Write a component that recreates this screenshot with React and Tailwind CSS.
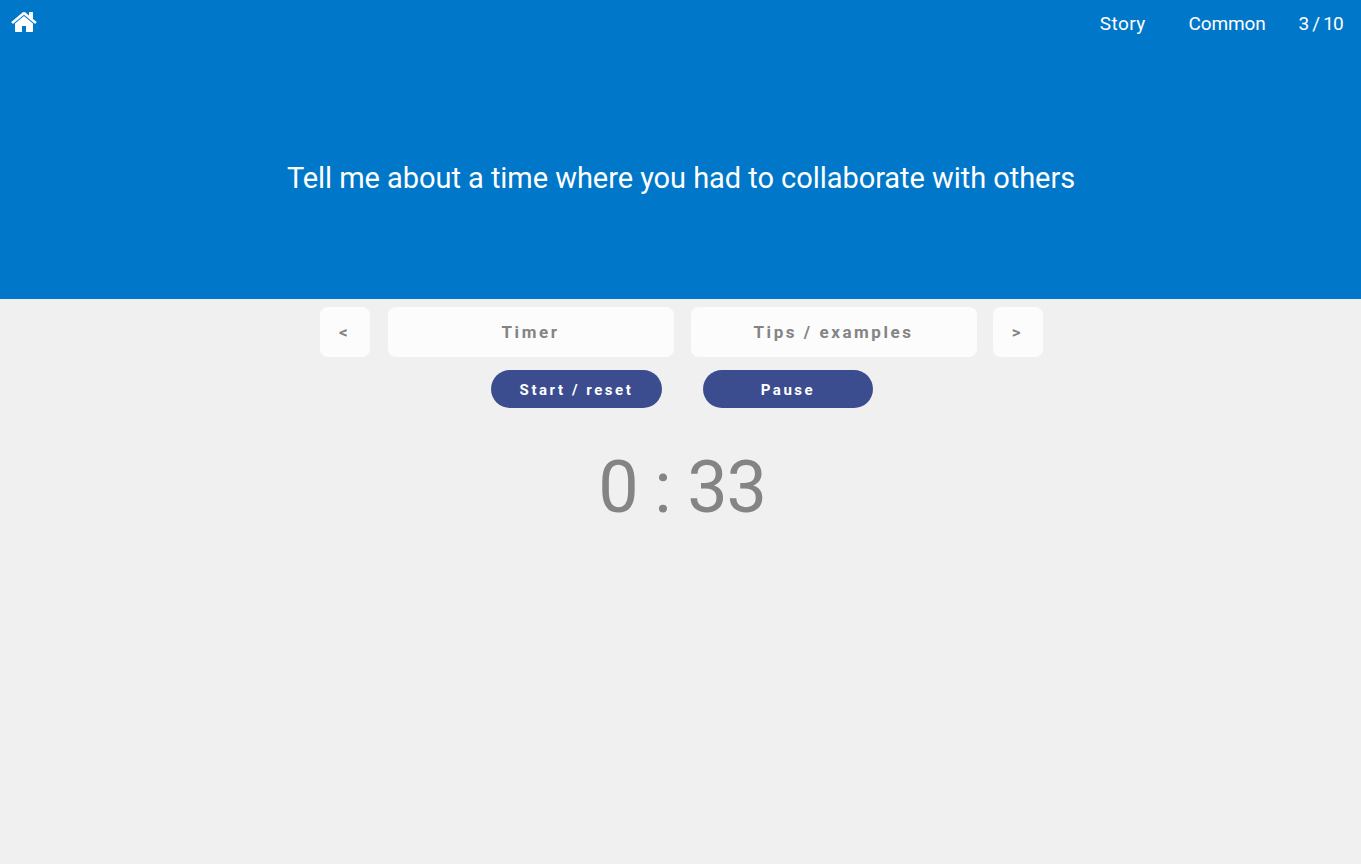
import React from "react";

function HomeIcon() {
  return (
    <svg viewBox="0 0 1792 1792" className="w-[28px] h-[28px] fill-white">
      <path d="M1472 992v480q0 26-19 45t-45 19h-384v-384h-256v384h-384q-26 0-45-19t-19-45v-480q0-1 .5-3t.5-3l575-474 575 474q1 2 1 6zm223-69l-62 74q-8 9-21 11h-3q-13 0-21-7l-692-577-692 577q-12 8-24 7-13-2-21-11l-62-74q-8-10-7-23.500t11-21.500l719-599q32-26 76-26t76 26l244 204v-195q0-14 9-23t23-9h192q14 0 23 9t9 23v408l219 182q10 8 11 21.500t-7 23.500z" />
    </svg>
  );
}

export default function App() {
  const nav = "font-['Roboto',sans-serif] text-[19px] leading-[23px] text-white";
  const box = "h-[50px] pt-[2px] rounded-lg bg-[#fcfcfc] flex items-center justify-center font-['Roboto',sans-serif] font-bold text-[17px] tracking-[2.55px] text-[#848484]";
  const pill = "h-[38px] pt-[2px] rounded-full bg-[#3b4d8f] flex items-center justify-center font-['Roboto',sans-serif] font-bold text-[15px] tracking-[2.55px] text-white";
  return (
    <div className="min-h-[864px] bg-[#f0f0f0] font-['Roboto',sans-serif]">
      <header className="h-[299px] bg-[#0077c8] flex flex-col">
        <div className="flex items-start justify-between pl-[10px] pr-[18px] pt-[8px]">
          <HomeIcon />
          <div className="flex items-center mt-[4px]">
            <span className={`${nav} mr-[43px] tracking-[0.4px]`}>Story</span>
            <span className={`${nav} mr-[33px] tracking-[-0.15px]`}>Common</span>
            <span className={`${nav} tracking-[-0.8px]`}>3 / 10</span>
          </div>
        </div>
        <div className="flex-1 flex items-center justify-center pt-[21px] pl-[1px]">
          <h1 className="font-normal text-[29px] leading-[36px] tracking-[-0.05px] text-white">Tell me about a time where you had to collaborate with others</h1>
        </div>
      </header>
      <div className="flex justify-center pt-[8px] pl-[1px]">
        <div className={`${box} w-[50px] mr-[18px]`}>&lt;</div>
        <div className={`${box} w-[286px] mr-[17px]`}>Timer</div>
        <div className={`${box} w-[286px] mr-[16px]`}>Tips / examples</div>
        <div className={`${box} w-[50px]`}>&gt;</div>
      </div>
      <div className="flex justify-center gap-[41px] pt-[13px] pl-[3px]">
        <div className={`${pill} w-[171px]`}>Start / reset</div>
        <div className={`${pill} w-[170px]`}>Pause</div>
      </div>
      <div className="text-center text-[72px] leading-[84px] font-normal tracking-[-1.2px] text-[#848484] pt-[38px] pl-[3px]">0 : 33</div>
    </div>
  );
}
